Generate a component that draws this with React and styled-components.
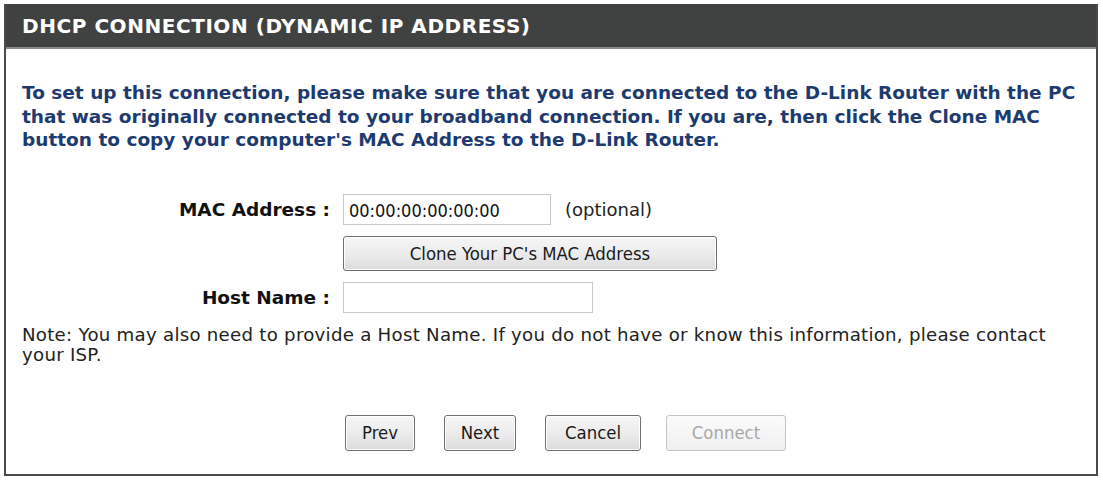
import React from "react"
import styled, { createGlobalStyle } from "styled-components"

const GlobalStyle = createGlobalStyle`
  html, body {
    margin: 0;
    padding: 0;
    background: #ffffff;
  }
  body {
    font-family: "DejaVu Sans", Tahoma, sans-serif;
  }
`

const Page = styled.div`
  width: 1103px;
  height: 481px;
  padding: 4px 5px 5px 4px;
  box-sizing: border-box;
`

const Panel = styled.section`
  height: 100%;
  box-sizing: border-box;
  border: 2px solid #4a4a4a;
  border-top: none;
  display: flex;
  flex-direction: column;
`

const Header = styled.h2`
  margin: 0;
  height: 42px;
  background: #404242;
  border-bottom: 2px solid #8a8a8a;
  color: #ffffff;
  font-family: "DejaVu Sans", Verdana, sans-serif;
  font-size: 20px;
  font-weight: bold;
  letter-spacing: 0.55px;
  display: flex;
  align-items: center;
  padding: 1px 16px 0;
`

const Body = styled.div`
  flex: 1;
  padding: 32px 16px 0;
  display: flex;
  flex-direction: column;
`

const Intro = styled.p`
  margin: 0;
  color: #1d3b6e;
  font-weight: bold;
  font-size: 18.5px;
  line-height: 23.5px;
  white-space: nowrap;
`

const Form = styled.div`
  margin-top: 42px;
  display: grid;
  grid-template-columns: 308px auto;
  column-gap: 13px;
  row-gap: 11px;
  align-items: center;
`

const Label = styled.label`
  text-align: right;
  font-weight: bold;
  font-size: 18.5px;
  color: #111;
`

const Field = styled.div`
  display: flex;
  align-items: center;
  gap: 14px;
  font-size: 18px;
  color: #222;
`

const TextInput = styled.input`
  width: ${(p) => p.$w}px;
  height: 31px;
  box-sizing: border-box;
  border: 1px solid #c8c8c8;
  padding: 2px 5px 0;
  font-family: "DejaVu Sans Condensed", "DejaVu Sans", sans-serif;
  font-size: 18px;
  color: #111;
  outline: none;
`

const Button = styled.button`
  height: ${(p) => (p.$wide ? 35 : 36)}px;
  width: ${(p) => p.$w}px;
  margin-left: ${(p) => p.$shift || 0}px;
  box-sizing: border-box;
  border: 1px solid ${(p) => (p.disabled ? "#c4c4c4" : "#6e6e6e")};
  border-radius: 3px;
  background: ${(p) =>
    p.disabled
      ? "linear-gradient(#fbfbfb, #f0f0f0)"
      : "linear-gradient(#f6f6f6 0%, #ececec 50%, #dcdcdc 100%)"};
  color: ${(p) => (p.disabled ? "#a8a8a8" : "#1a1a1a")};
  font-family: "DejaVu Sans Condensed", "DejaVu Sans", sans-serif;
  font-size: 18.4px;
  padding: 0;
  box-shadow: ${(p) => (p.disabled ? "none" : "inset 0 0 0 1px #ffffff")};
`

const Note = styled.p`
  margin: 12px 0 0;
  color: #222;
  font-size: 18.2px;
  letter-spacing: 0.25px;
  line-height: 20px;
  white-space: nowrap;
`

const Actions = styled.div`
  margin-top: 50px;
  padding-left: 323px;
  display: flex;
  gap: 29px;
`

export default function App() {
  return (
    <>
      <GlobalStyle />
      <Page>
        <Panel>
          <Header>DHCP CONNECTION (DYNAMIC IP ADDRESS)</Header>
          <Body>
            <Intro>
              To set up this connection, please make sure that you are connected to the D-Link Router with the PC
              <br />
              that was originally connected to your broadband connection. If you are, then click the Clone MAC
              <br />
              button to copy your computer's MAC Address to the D-Link Router.
            </Intro>
            <Form>
              <Label>MAC Address :</Label>
              <Field>
                <TextInput $w={208} defaultValue="00:00:00:00:00:00" />
                <span>(optional)</span>
              </Field>
              <span />
              <Field>
                <Button $wide $w={374}>Clone Your PC's MAC Address</Button>
              </Field>
              <Label>Host Name :</Label>
              <Field>
                <TextInput $w={250} />
              </Field>
            </Form>
            <Note>
              Note: You may also need to provide a Host Name. If you do not have or know this information, please contact
              <br />
              your ISP.
            </Note>
            <Actions>
              <Button $w={70}>Prev</Button>
              <Button $w={72}>Next</Button>
              <Button $w={96}>Cancel</Button>
              <Button $w={120} $shift={-4} disabled>Connect</Button>
            </Actions>
          </Body>
        </Panel>
      </Page>
    </>
  )
}
